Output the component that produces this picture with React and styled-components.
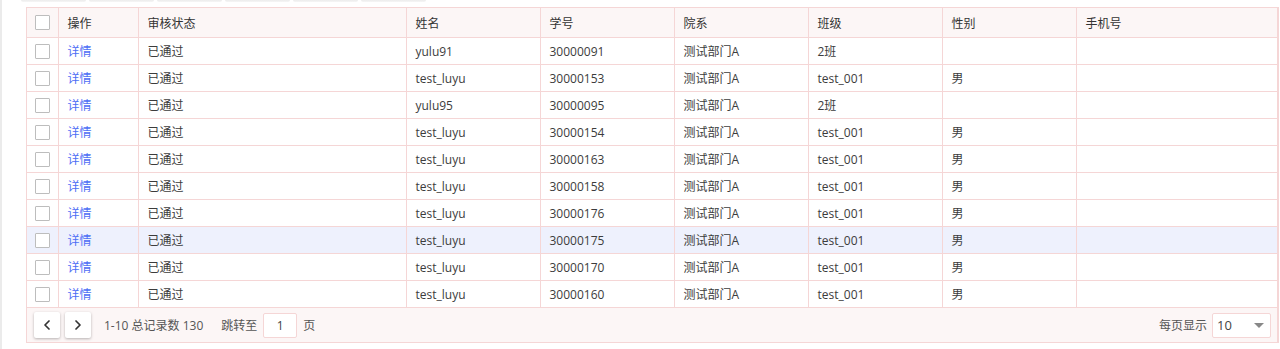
import React from 'react';
import styled, { createGlobalStyle } from 'styled-components';
import { ChevronLeft, ChevronRight } from 'lucide-react';

const GlobalStyle = createGlobalStyle`
  html, body {
    margin: 0;
    padding: 0;
    background: #fff;
  }
  body {
    font-family: "Open Sans", "Noto Sans CJK SC", sans-serif;
    font-size: 12px;
    color: #333;
  }
  * { box-sizing: border-box; }
`;

const COLS = '32px 80px 268px 134px 134px 134px 134px 134px 200px';
const LINE = '#f5d6d6';

const Page = styled.div`
  border-left: 2px solid #ebebeb;
  padding: 0 1px 6px 24px;
  min-height: 349px;
`;

const TabEdges = styled.div`
  display: flex;
  gap: 3px;
  height: 2px;
  margin: 0 0 5px -5px;
`;

const TabEdge = styled.div`
  width: 65px;
  height: 2px;
  background: linear-gradient(#ececec, #f6f6f6);
  border-radius: 0 0 3px 3px;
`;

const Grid = styled.div`
  border: 1px solid ${LINE};
  border-right-width: 2px;
`;

const Row = styled.div`
  display: grid;
  grid-template-columns: ${COLS};
  height: ${(p) => (p.$head ? '30px' : '27px')};
  border-bottom: 1px solid ${LINE};
  background: ${(p) => (p.$head ? '#fcf6f6' : p.$active ? '#eef1fd' : '#fff')};
`;

const Cell = styled.div`
  display: flex;
  align-items: center;
  padding-left: 8.5px;
  border-right: 1px solid ${LINE};
  white-space: nowrap;
  overflow: hidden;
  color: ${(p) => (p.$head ? '#333' : '#3c3c3c')};
  &:last-child { border-right: none; }
`;

const CheckCell = styled(Cell)`
  padding-left: 8px;
`;

const Check = styled.span`
  display: block;
  width: 15px;
  height: 15px;
  border: 1px solid #bdbdbd;
  border-radius: 1px;
  background: #fff;
`;

const Link = styled.a`
  color: #4d6ef5;
  text-decoration: none;
  cursor: pointer;
`;

const Footer = styled.div`
  display: flex;
  align-items: center;
  height: 34px;
  padding: 0 6px 0 7px;
  background: #fcf6f6;
  color: #555;
`;

const PageBtn = styled.button`
  display: flex;
  align-items: center;
  justify-content: center;
  width: 26px;
  height: 26px;
  padding: 0;
  margin-right: 5px;
  border: none;
  border-radius: 2px;
  background: #fff;
  color: #333;
  box-shadow: 0 1px 3px rgba(0, 0, 0, 0.28);
`;

const Info = styled.span`
  margin-left: 8px;
`;

const Jump = styled.span`
  margin-left: 18px;
`;

const PageInput = styled.div`
  width: 34px;
  height: 25px;
  margin: 0 6px;
  display: flex;
  align-items: center;
  justify-content: center;
  background: #fff;
  border: 1px solid ${LINE};
  border-radius: 2px;
  color: #444;
`;

const Spacer = styled.div`
  flex: 1;
`;

const SizeSelect = styled.div`
  width: 59px;
  height: 25px;
  margin-left: 5px;
  display: flex;
  align-items: center;
  justify-content: space-between;
  padding: 0 6px 0 4px;
  background: #fff;
  border: 1px solid ${LINE};
  border-radius: 2px;
  color: #444;
  font-size: 13px;
`;

const Caret = styled.span`
  width: 0;
  height: 0;
  border-left: 5px solid transparent;
  border-right: 5px solid transparent;
  border-top: 5px solid #888;
`;

const headers = ['操作', '审核状态', '姓名', '学号', '院系', '班级', '性别', '手机号'];

const rows = [
  ['yulu91', '30000091', '2班', ''],
  ['test_luyu', '30000153', 'test_001', '男'],
  ['yulu95', '30000095', '2班', ''],
  ['test_luyu', '30000154', 'test_001', '男'],
  ['test_luyu', '30000163', 'test_001', '男'],
  ['test_luyu', '30000158', 'test_001', '男'],
  ['test_luyu', '30000176', 'test_001', '男'],
  ['test_luyu', '30000175', 'test_001', '男'],
  ['test_luyu', '30000170', 'test_001', '男'],
  ['test_luyu', '30000160', 'test_001', '男'],
];

export default function App() {
  return (
    <Page>
      <GlobalStyle />
      <TabEdges>
        {[0, 1, 2, 3, 4, 5].map((i) => <TabEdge key={i} />)}
      </TabEdges>
      <Grid>
        <Row $head>
          <CheckCell><Check /></CheckCell>
          {headers.map((h) => <Cell $head key={h}>{h}</Cell>)}
        </Row>
        {rows.map(([name, no, cls, sex], i) => (
          <Row key={no} $active={i === 7}>
            <CheckCell><Check /></CheckCell>
            <Cell><Link>详情</Link></Cell>
            <Cell>已通过</Cell>
            <Cell>{name}</Cell>
            <Cell>{no}</Cell>
            <Cell>测试部门A</Cell>
            <Cell>{cls}</Cell>
            <Cell>{sex}</Cell>
            <Cell></Cell>
          </Row>
        ))}
        <Footer>
          <PageBtn><ChevronLeft size={16} strokeWidth={2.6} /></PageBtn>
          <PageBtn><ChevronRight size={16} strokeWidth={2.6} /></PageBtn>
          <Info>1-10 总记录数 130</Info>
          <Jump>跳转至</Jump>
          <PageInput>1</PageInput>
          <span>页</span>
          <Spacer />
          <span>每页显示</span>
          <SizeSelect>
            <span>10</span>
            <Caret />
          </SizeSelect>
        </Footer>
      </Grid>
    </Page>
  );
}
